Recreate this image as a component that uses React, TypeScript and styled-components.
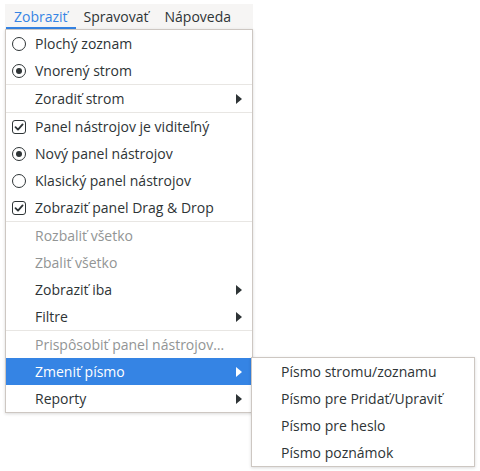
import React from "react";
import styled, { createGlobalStyle } from "styled-components";

const Global = createGlobalStyle`
  html, body { margin: 0; padding: 0; background: #ffffff; }
  body { font-family: "Open Sans", "Noto Sans", sans-serif; }
`;

const Page = styled.div`
  position: relative;
  width: 480px;
  height: 471px;
  padding: 4px 0 0 5px;
  box-sizing: border-box;
`;

const MenuBar = styled.div`
  display: flex;
  width: 248px;
  height: 25px;
  background: #f6f5f4;
  padding-left: 1px;
  box-sizing: border-box;
`;

const BarItem = styled.div<{ $active?: boolean }>`
  display: flex;
  align-items: center;
  padding: 0 8px;
  font-size: 14px;
  color: ${(p) => (p.$active ? "#3584e4" : "#2e3436")};
  box-shadow: ${(p) => (p.$active ? "inset 0 -2px 0 #3584e4" : "none")};
`;

const Menu = styled.div<{ $left: number; $top: number; $width: number }>`
  position: absolute;
  left: ${(p) => p.$left}px;
  top: ${(p) => p.$top}px;
  width: ${(p) => p.$width}px;
  box-sizing: border-box;
  background: #ffffff;
  border: 1px solid #cdc7c2;
  box-shadow: 0 1px 3px rgba(0, 0, 0, 0.15);
  display: flex;
  flex-direction: column;
`;

const Item = styled.div<{ $disabled?: boolean; $hover?: boolean }>`
  display: flex;
  align-items: center;
  height: 27px;
  padding: 0 10px 0 6px;
  font-size: 14px;
  white-space: nowrap;
  background: ${(p) => (p.$hover ? "#3584e4" : "transparent")};
  color: ${(p) => (p.$hover ? "#ffffff" : p.$disabled ? "#929595" : "#2e3436")};
`;

const IconSlot = styled.span`
  width: 23px;
  height: 14px;
  flex: none;
  display: flex;
  align-items: center;
`;

const Label = styled.span`
  flex: 1;
`;

const Separator = styled.div`
  height: 1px;
  background: #e8e6e3;
`;

const Radio = styled.span<{ $checked?: boolean }>`
  width: 14px;
  height: 14px;
  box-sizing: border-box;
  border: 1px solid #2e3436;
  border-radius: 50%;
  display: flex;
  align-items: center;
  justify-content: center;
  &::after {
    content: "";
    width: 6px;
    height: 6px;
    border-radius: 50%;
    background: #2e3436;
    display: ${(p) => (p.$checked ? "block" : "none")};
  }
`;

const CheckBox = styled.span`
  width: 14px;
  height: 14px;
  box-sizing: border-box;
  border: 1px solid #2e3436;
  border-radius: 3px;
  display: flex;
  align-items: center;
  justify-content: center;
`;

const Arrow = styled.span<{ $light?: boolean }>`
  width: 0;
  height: 0;
  border-top: 5px solid transparent;
  border-bottom: 5px solid transparent;
  border-left: 6px solid ${(p) => (p.$light ? "#ffffff" : "#2e3436")};
`;

const Check = () => (
  <CheckBox>
    <svg width="10" height="10" viewBox="0 0 10 10">
      <path d="M1.5 5.2 L4 7.6 L8.6 2.4" fill="none" stroke="#2e3436" strokeWidth="1.8" strokeLinecap="round" strokeLinejoin="round" />
    </svg>
  </CheckBox>
);

type Entry =
  | { sep: true }
  | { sep?: false; label: string; icon?: "radio" | "radioOn" | "check"; sub?: boolean; disabled?: boolean; hover?: boolean };

const entries: Entry[] = [
  { label: "Plochý zoznam", icon: "radio" },
  { label: "Vnorený strom", icon: "radioOn" },
  { sep: true },
  { label: "Zoradiť strom", sub: true },
  { sep: true },
  { label: "Panel nástrojov je viditeľný", icon: "check" },
  { label: "Nový panel nástrojov", icon: "radioOn" },
  { label: "Klasický panel nástrojov", icon: "radio" },
  { label: "Zobraziť panel Drag & Drop", icon: "check" },
  { sep: true },
  { label: "Rozbaliť všetko", disabled: true },
  { label: "Zbaliť všetko", disabled: true },
  { label: "Zobraziť iba", sub: true },
  { label: "Filtre", sub: true },
  { sep: true },
  { label: "Prispôsobiť panel nástrojov…", disabled: true },
  { label: "Zmeniť písmo", sub: true, hover: true },
  { label: "Reporty", sub: true },
];

const subEntries = ["Písmo stromu/zoznamu", "Písmo pre Pridať/Upraviť", "Písmo pre heslo", "Písmo poznámok"];

export default function App() {
  return (
    <Page>
      <Global />
      <MenuBar>
        <BarItem $active>Zobraziť</BarItem>
        <BarItem>Spravovať</BarItem>
        <BarItem>Nápoveda</BarItem>
      </MenuBar>
      <Menu $left={5} $top={29} $width={248}>
        {entries.map((e, i) =>
          e.sep ? (
            <Separator key={i} />
          ) : (
            <Item key={i} $disabled={e.disabled} $hover={e.hover}>
              <IconSlot>
                {e.icon === "radio" && <Radio />}
                {e.icon === "radioOn" && <Radio $checked />}
                {e.icon === "check" && <Check />}
              </IconSlot>
              <Label>{e.label}</Label>
              {e.sub && <Arrow $light={e.hover} />}
            </Item>
          )
        )}
      </Menu>
      <Menu $left={251} $top={357} $width={224}>
        {subEntries.map((s) => (
          <Item key={s}>
            <IconSlot />
            <Label>{s}</Label>
          </Item>
        ))}
      </Menu>
    </Page>
  );
}
